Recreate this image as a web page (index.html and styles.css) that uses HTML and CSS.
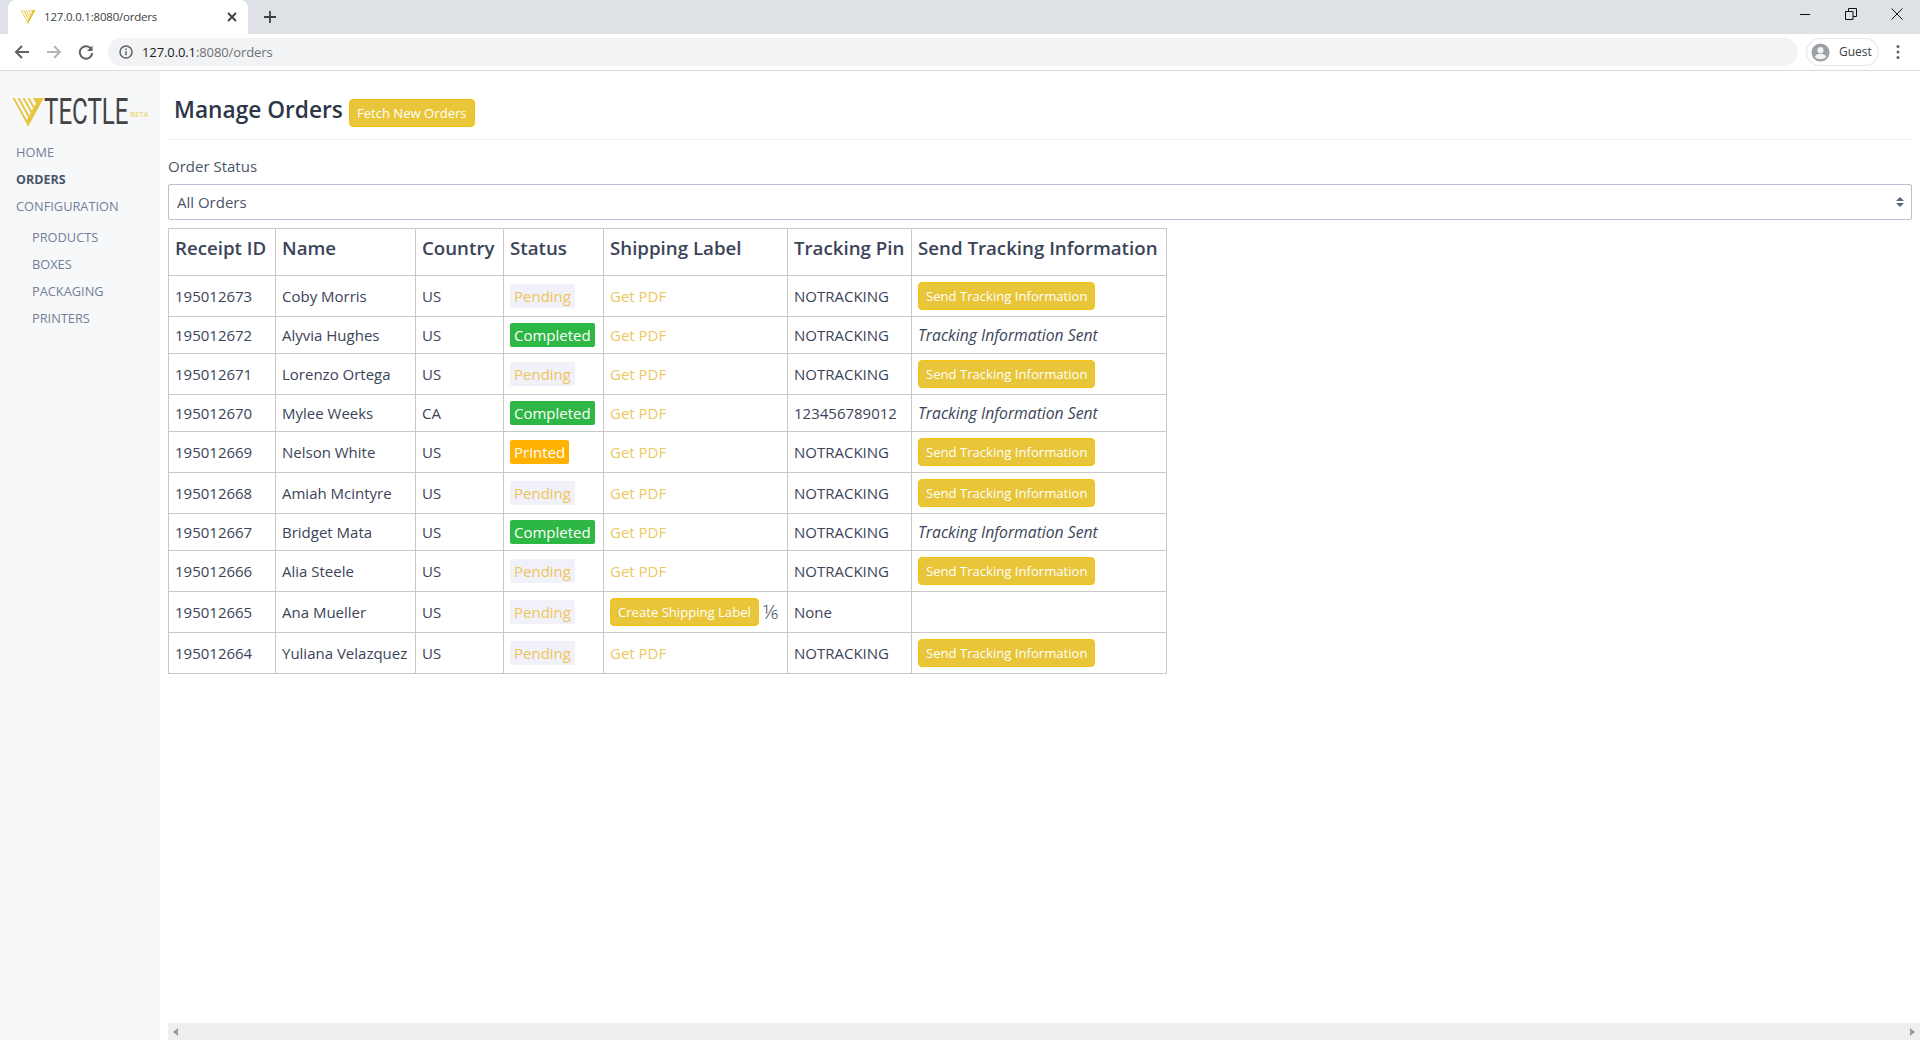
FILE: index.html
```html
<!DOCTYPE html>
<html lang="en">
<head>
<meta charset="utf-8">
<title>Manage Orders</title>
<link rel="stylesheet" href="styles.css">
</head>
<body>
<svg class="defs" width="0" height="0" aria-hidden="true">
  <clipPath id="logo-clip"><path d="M0 0h32L16 29z"/></clipPath>
  <symbol id="logo" viewBox="0 0 32 29">
    <g clip-path="url(#logo-clip)">
      <path fill="none" stroke="#e8c53f" stroke-width="1.900" d="M1 -1L17 28M6 -1L19 22.500M11 -1L21 17M16 -1L23 11.700"/>
      <path fill="#e8c53f" d="M32 0H21L24 5.500L14.500 22.500L16 29z"/>
    </g>
  </symbol>
</svg>
<div class="browser">
  <div class="tabstrip">
    <div class="tab">
      <svg class="favicon"><use href="#logo"/></svg>
      <span class="tab-title">127.0.0.1:8080/orders</span>
      <svg class="tab-close" viewBox="0 0 10 10"><path d="M1 1l8 8M9 1l-8 8"/></svg>
    </div>
    <svg class="new-tab" viewBox="0 0 12 12"><path d="M6 0v12M0 6h12"/></svg>
    <div class="win-controls">
      <svg viewBox="0 0 12 12"><path d="M1 6.500h10"/></svg>
      <svg viewBox="0 0 12 12"><path d="M.5 3.500h7.500v8h-7.500zM3.500 3.500v-3h8v8h-3.500"/></svg>
      <svg viewBox="0 0 12 12"><path d="M.5.5l11 11M11.500.5l-11 11"/></svg>
    </div>
  </div>
  <div class="toolbar">
    <svg class="nav-icon" viewBox="0 0 16 16"><path d="M15 8H2M8 2L2 8l6 6"/></svg>
    <svg class="nav-icon nav-off" viewBox="0 0 16 16"><path d="M1 8h13M8 2l6 6-6 6"/></svg>
    <svg class="nav-icon" viewBox="0 0 16 16"><path d="M13.500 5.500A6.200 6.200 0 1 0 14.200 9"/><path class="solid" d="M14.500 1.500v5.500H9z"/></svg>
    <div class="omnibox">
      <svg class="info" viewBox="0 0 14 14"><circle cx="7" cy="7" r="6"/><path d="M7 6.200v4M7 3.500v1.500"/></svg>
      <span class="url"><span class="url-host">127.0.0.1</span>:8080/orders</span>
    </div>
    <div class="profile">
      <svg class="avatar" viewBox="0 0 20 20"><circle cx="10" cy="10" r="9.500" fill="#9aa0a6"/><circle cx="10" cy="7.500" r="3.200" fill="#f1f3f4"/><ellipse cx="10" cy="14.300" rx="5.800" ry="2.900" fill="#f1f3f4"/></svg>
      <span>Guest</span>
    </div>
    <svg class="kebab" viewBox="0 0 4 16"><circle cx="2" cy="2.500" r="1.500"/><circle cx="2" cy="8" r="1.500"/><circle cx="2" cy="13.500" r="1.500"/></svg>
  </div>
</div>
<div class="app">
  <aside class="sidebar">
    <div class="brand">
      <svg class="brand-mark"><use href="#logo"/></svg>
      <span class="brand-name">TECTLE</span>
      <span class="brand-beta">BETA</span>
    </div>
    <nav class="nav">
      <a class="nav-link">HOME</a>
      <a class="nav-link active">ORDERS</a>
      <a class="nav-link">CONFIGURATION</a>
      <div class="subnav">
        <a class="nav-link sub">PRODUCTS</a>
        <a class="nav-link sub">BOXES</a>
        <a class="nav-link sub">PACKAGING</a>
        <a class="nav-link sub">PRINTERS</a>
      </div>
    </nav>
  </aside>
  <main class="main">
    <div class="content">
      <header class="page-head">
        <h1>Manage Orders</h1>
        <button class="btn btn-fetch">Fetch New Orders</button>
      </header>
      <label class="field-label" for="status">Order Status</label>
      <div class="select-wrap">
        <select id="status" class="select"><option>All Orders</option></select>
        <svg class="select-arrows" viewBox="0 0 8 10"><path d="M4 0l4 4H0zM4 10L0 6h8z"/></svg>
      </div>
      <table class="orders">
        <thead>
          <tr><th class="c1">Receipt ID</th><th class="c2">Name</th><th class="c3">Country</th><th class="c4">Status</th><th class="c5">Shipping Label</th><th class="c6">Tracking Pin</th><th class="c7">Send Tracking Information</th></tr>
        </thead>
        <tbody>
          <tr><td>195012673</td><td>Coby Morris</td><td>US</td><td><span class="badge pending">Pending</span></td><td><a class="link">Get PDF</a></td><td>NOTRACKING</td><td><button class="btn">Send Tracking Information</button></td></tr>
          <tr><td>195012672</td><td>Alyvia Hughes</td><td>US</td><td><span class="badge completed">Completed</span></td><td><a class="link">Get PDF</a></td><td>NOTRACKING</td><td><em>Tracking Information Sent</em></td></tr>
          <tr><td>195012671</td><td>Lorenzo Ortega</td><td>US</td><td><span class="badge pending">Pending</span></td><td><a class="link">Get PDF</a></td><td>NOTRACKING</td><td><button class="btn">Send Tracking Information</button></td></tr>
          <tr><td>195012670</td><td>Mylee Weeks</td><td>CA</td><td><span class="badge completed">Completed</span></td><td><a class="link">Get PDF</a></td><td>123456789012</td><td><em>Tracking Information Sent</em></td></tr>
          <tr><td>195012669</td><td>Nelson White</td><td>US</td><td><span class="badge printed">Printed</span></td><td><a class="link">Get PDF</a></td><td>NOTRACKING</td><td><button class="btn">Send Tracking Information</button></td></tr>
          <tr><td>195012668</td><td>Amiah Mcintyre</td><td>US</td><td><span class="badge pending">Pending</span></td><td><a class="link">Get PDF</a></td><td>NOTRACKING</td><td><button class="btn">Send Tracking Information</button></td></tr>
          <tr><td>195012667</td><td>Bridget Mata</td><td>US</td><td><span class="badge completed">Completed</span></td><td><a class="link">Get PDF</a></td><td>NOTRACKING</td><td><em>Tracking Information Sent</em></td></tr>
          <tr><td>195012666</td><td>Alia Steele</td><td>US</td><td><span class="badge pending">Pending</span></td><td><a class="link">Get PDF</a></td><td>NOTRACKING</td><td><button class="btn">Send Tracking Information</button></td></tr>
          <tr><td>195012665</td><td>Ana Mueller</td><td>US</td><td><span class="badge pending">Pending</span></td><td><div class="label-cell"><button class="btn">Create Shipping Label</button><span class="fraction">⅙</span></div></td><td>None</td><td></td></tr>
          <tr><td>195012664</td><td>Yuliana Velazquez</td><td>US</td><td><span class="badge pending">Pending</span></td><td><a class="link">Get PDF</a></td><td>NOTRACKING</td><td><button class="btn">Send Tracking Information</button></td></tr>
        </tbody>
      </table>
    </div>
    <div class="hscroll">
      <span class="arrow-left"></span>
      <span class="arrow-right"></span>
    </div>
  </main>
</div>
</body>
</html>
```
FILE: styles.css
```css
* { box-sizing: border-box; }
html, body { height: 100%; }
body {
  margin: 0;
  display: flex;
  flex-direction: column;
  overflow: hidden;
  background: #fff;
  color: #3b4459;
  font-family: "Open Sans", "Noto Sans", sans-serif;
  font-size: 15px;
  line-height: 24px;
}
.defs { position: absolute; }

/* browser chrome */
.browser { flex: none; height: 71px; border-bottom: 1px solid #dadce0; }
.tabstrip { height: 34px; background: #dee1e6; display: flex; align-items: center; padding-left: 8px; }
.tab {
  width: 240px; height: 34px; background: #fff; border-radius: 8px 8px 0 0;
  display: flex; align-items: center; padding: 0 11px 0 12px;
}
.favicon { width: 16px; height: 16px; flex: none; }
.tab-title { flex: 1; margin-left: 8px; font-size: 11.500px; color: #3c4043; letter-spacing: -.2px; }
.tab-close { width: 10px; height: 10px; stroke: #3c4043; stroke-width: 1.800; fill: none; }
.new-tab { width: 12px; height: 12px; margin-left: 16px; stroke: #3c4043; stroke-width: 1.800; fill: none; }
.win-controls { margin-left: auto; display: flex; gap: 34px; padding-right: 17px; }
.win-controls svg { width: 12px; height: 12px; stroke: #111; stroke-width: 1; fill: none; margin-bottom: 6px; }
.toolbar { height: 36px; display: flex; align-items: center; padding-left: 14px; }
.nav-icon { width: 16px; height: 16px; margin-right: 16px; stroke: #5f6368; stroke-width: 2; fill: none; flex: none; }
.nav-icon .solid { fill: #5f6368; stroke: none; }
.nav-off { stroke: #b3b6ba; }
.omnibox {
  width: 1690px; height: 28px; margin-left: -2px; background: #f1f3f4; border-radius: 14px;
  display: flex; align-items: center; padding-left: 11px; flex: none;
}
.info { width: 14px; height: 14px; stroke: #5f6368; stroke-width: 1.500; fill: none; flex: none; }
.url { margin-left: 9px; font-size: 13px; color: #6d7175; letter-spacing: -.1px; }
.url-host { color: #202124; }
.profile {
  width: 73px; height: 28px; margin-left: 8px; border: 1px solid #e3e5e8; border-radius: 14px;
  display: flex; align-items: center; gap: 9px; padding-left: 4px; font-size: 12px; color: #3c4043; flex: none;
}
.avatar { width: 19px; height: 19px; flex: none; }
.kebab { width: 4px; height: 16px; margin-left: 17px; fill: #5f6368; flex: none; }

/* app layout */
.app { flex: 1; min-height: 0; display: flex; }
.sidebar { width: 160px; flex: none; background: #f7f8fa; padding: 27px 0 0 12px; }
.brand { display: flex; align-items: center; height: 29px; }
.brand-mark { width: 32px; height: 29px; flex: none; }
.brand-name {
  display: inline-block; width: 80px; margin-left: 0; font-family: "Roboto", sans-serif; font-weight: 400;
  font-size: 36px; line-height: 29px; color: #444; transform: scaleX(.67); transform-origin: left center; white-space: nowrap;
}
.brand-beta { margin: 2px 0 0 6px; font-size: 7.500px; line-height: 10px; font-weight: 700; color: #efdc8f; }
.nav { margin-top: 12px; padding-left: 4px; display: flex; flex-direction: column; }
.nav-link { font-size: 12.800px; line-height: 27px; color: #718096; white-space: nowrap; }
.nav-link.active { color: #4a5568; font-weight: 700; font-size: 12.500px; }
.subnav { margin-top: 4px; padding-left: 16px; display: flex; flex-direction: column; }
.main { flex: 1; min-width: 0; display: flex; flex-direction: column; padding-left: 8px; }
.content { flex: 1; min-height: 0; padding-right: 8px; }
.page-head {
  height: 69px; border-bottom: 1px solid #edf0f2; padding: 10px 0 0 6px;
  display: flex; align-items: center; gap: 6px;
}
h1 { margin: 0; font-size: 22.700px; line-height: 32px; font-weight: 600; color: #2d3748; }
.btn {
  display: inline-block; height: 28px; padding: 0 7px; border: 1px solid #f4c20d; border-radius: 4px;
  background: #e8c539; color: #fff; font: inherit; font-size: 13.100px; line-height: 26px; white-space: nowrap; vertical-align: top;
}
.btn-fetch { margin-top: 5px; }
.field-label { display: block; margin-top: 14px; line-height: 24px; color: #4a5568; }
.select-wrap { position: relative; margin-top: 6px; }
.select {
  display: block; width: 100%; height: 36px; padding: 0 8px; appearance: none; background: #fff;
  border: 1px solid #b8bfd0; border-radius: 2px; font: inherit; color: #4a5568;
}
.select-arrows { position: absolute; right: 8px; top: 13px; width: 8px; height: 10px; fill: #5a6480; }
.orders { margin-top: 8px; width: 998px; table-layout: fixed; border-collapse: collapse; }
.orders th, .orders td { border: 1px solid #c8c8c8; padding: 6px; text-align: left; vertical-align: middle; white-space: nowrap; }
.orders th { height: 47px; padding-bottom: 14px; font-size: 18.700px; line-height: 26px; font-weight: 600; color: #3b4459; }
.orders td { line-height: 24px; }
.orders em { font-size: 15.700px; }
.c1 { width: 107px; } .c2 { width: 140px; } .c3 { width: 88px; } .c4 { width: 100px; }
.c5 { width: 184px; } .c6 { width: 124px; } .c7 { width: 255px; }
.badge { display: inline-block; padding: 0 4px; border-radius: 2px; }
.pending { background: #f1f1fa; color: #eec558; }
.completed { background: #2db744; color: #fff; }
.printed { background: #ffb300; color: #fff; }
.link { color: #ecc85f; }
.label-cell { display: flex; align-items: center; gap: 4px; }
.fraction { font-size: 20px; font-weight: 300; color: #4a5568; }

/* bottom scrollbar */
.hscroll { flex: none; height: 17px; background: #efefef; display: flex; align-items: center; justify-content: space-between; padding: 0 5px; }
.arrow-left { border: 4px solid transparent; border-left: 0; border-right: 5px solid #9b9b9b; }
.arrow-right { border: 4px solid transparent; border-right: 0; border-left: 5px solid #9b9b9b; }
```
